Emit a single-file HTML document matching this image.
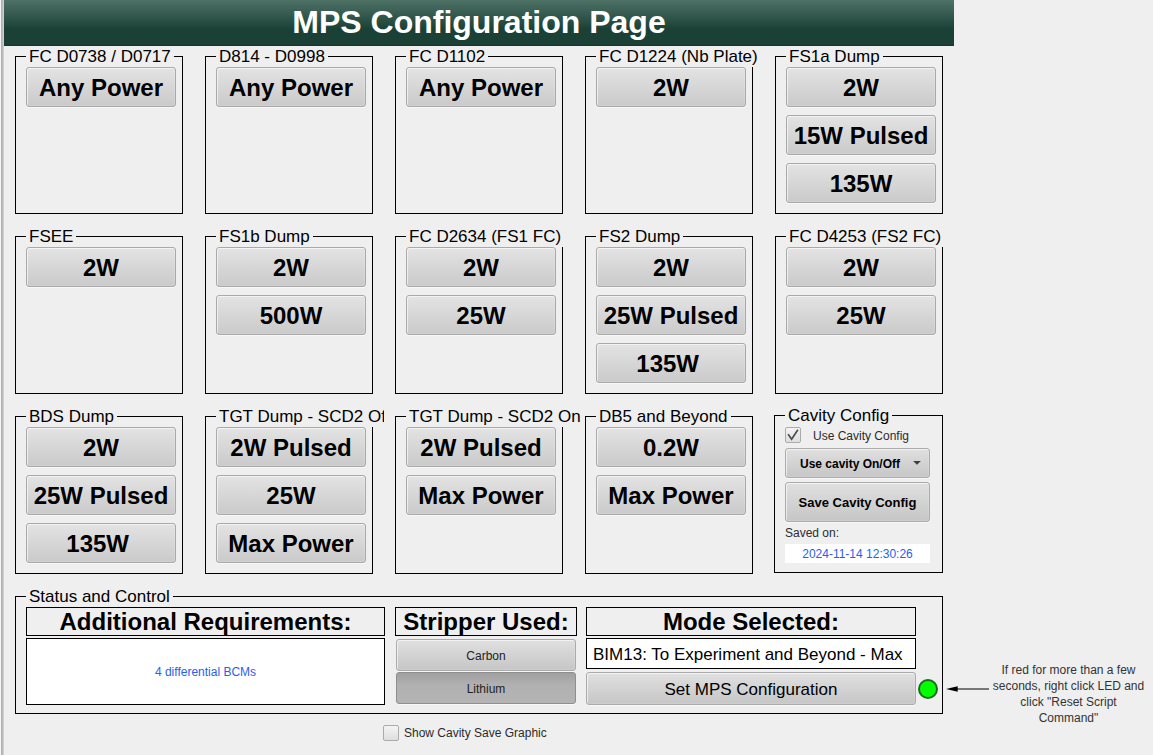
<!DOCTYPE html>
<html><head><meta charset="utf-8"><title>MPS Configuration Page</title>
<style>
*{box-sizing:border-box;margin:0;padding:0}
html,body{width:1153px;height:755px;overflow:hidden;background:#efefef;font-family:"Liberation Sans",sans-serif;position:relative}
.abs{position:absolute}
#edge{position:absolute;left:0;top:0;width:5px;height:755px;background:linear-gradient(to right,#f6f6f6 0,#f6f6f6 1px,#afafaf 1px,#b4b4b4 2px,#c2c2c2 3px,#d8d8d8 4px,#f1f1f1 4px)}
#hdr{position:absolute;left:4px;top:0;width:950px;height:46px;background:linear-gradient(to bottom,#4f7267 0px,#1b4137 29px,#1b4137 44px,#143328 46px);color:#fff;font-weight:bold;font-size:32px;text-align:center;line-height:44px}
.gb{position:absolute;border:1px solid #000;width:168px;height:158px}
.gt{position:absolute;background:#efefef;font-size:17px;line-height:20px;height:20px;padding:0 3px;white-space:nowrap;color:#000;overflow:hidden}
.btn{position:absolute;width:150px;height:40px;border:1px solid #a9a9a9;border-radius:3px;background:linear-gradient(to bottom,#e3e3e3,#cacaca);box-shadow:inset 1px 1px 0 rgba(255,255,255,.6),inset -1px -1px 0 rgba(255,255,255,.13),0 1px 0 rgba(255,255,255,.55);font-weight:bold;font-size:24px;text-align:center;line-height:38px;padding-top:1px;color:#000;white-space:nowrap}
.lbl{position:absolute;border:1px solid #000;font-weight:bold;font-size:24px;text-align:center;line-height:26px;padding-top:1px;white-space:nowrap}
.sb{position:absolute;padding-top:1px;border:1px solid #ababab;border-radius:3px;background:linear-gradient(to bottom,#e0e0e0,#c6c6c6);box-shadow:inset 1px 1px 0 rgba(255,255,255,.6),inset -1px -1px 0 rgba(255,255,255,.13),0 1px 0 rgba(255,255,255,.55);text-align:center;white-space:nowrap;color:#2b2b2b}
.cb{position:absolute;width:16px;height:16px;border:1px solid #ababab;border-radius:2px;background:linear-gradient(to bottom,#f4f4f4,#dedede)}
</style></head><body>
<div id="edge"></div>
<div id="hdr">MPS Configuration Page</div>

<div class="gb" style="left:15px;top:56px"></div>
<div class="gt" style="left:26px;top:47px">FC D0738 / D0717</div>
<div class="btn" style="left:26px;top:67px">Any Power</div>
<div class="gb" style="left:205px;top:56px"></div>
<div class="gt" style="left:216px;top:47px">D814 - D0998</div>
<div class="btn" style="left:216px;top:67px">Any Power</div>
<div class="gb" style="left:395px;top:56px"></div>
<div class="gt" style="left:406px;top:47px">FC D1102</div>
<div class="btn" style="left:406px;top:67px">Any Power</div>
<div class="gb" style="left:585px;top:56px"></div>
<div class="gt" style="left:596px;top:47px">FC D1224 (Nb Plate)</div>
<div class="btn" style="left:596px;top:67px">2W</div>
<div class="gb" style="left:775px;top:56px"></div>
<div class="gt" style="left:786px;top:47px">FS1a Dump</div>
<div class="btn" style="left:786px;top:67px">2W</div>
<div class="btn" style="left:786px;top:115px">15W Pulsed</div>
<div class="btn" style="left:786px;top:163px">135W</div>
<div class="gb" style="left:15px;top:236px"></div>
<div class="gt" style="left:26px;top:227px">FSEE</div>
<div class="btn" style="left:26px;top:247px">2W</div>
<div class="gb" style="left:205px;top:236px"></div>
<div class="gt" style="left:216px;top:227px">FS1b Dump</div>
<div class="btn" style="left:216px;top:247px">2W</div>
<div class="btn" style="left:216px;top:295px">500W</div>
<div class="gb" style="left:395px;top:236px"></div>
<div class="gt" style="left:406px;top:227px">FC D2634 (FS1 FC)</div>
<div class="btn" style="left:406px;top:247px">2W</div>
<div class="btn" style="left:406px;top:295px">25W</div>
<div class="gb" style="left:585px;top:236px"></div>
<div class="gt" style="left:596px;top:227px">FS2 Dump</div>
<div class="btn" style="left:596px;top:247px">2W</div>
<div class="btn" style="left:596px;top:295px">25W Pulsed</div>
<div class="btn" style="left:596px;top:343px">135W&nbsp;</div>
<div class="gb" style="left:775px;top:236px"></div>
<div class="gt" style="left:786px;top:227px">FC D4253 (FS2 FC)</div>
<div class="btn" style="left:786px;top:247px">2W</div>
<div class="btn" style="left:786px;top:295px">25W</div>
<div class="gb" style="left:15px;top:416px"></div>
<div class="gt" style="left:26px;top:407px">BDS Dump</div>
<div class="btn" style="left:26px;top:427px">2W</div>
<div class="btn" style="left:26px;top:475px">25W Pulsed</div>
<div class="btn" style="left:26px;top:523px">135W&nbsp;</div>
<div class="gb" style="left:205px;top:416px"></div>
<div class="gt" style="left:216px;top:407px;width:168px;padding-right:0">TGT Dump - SCD2 Off</div>
<div class="btn" style="left:216px;top:427px">2W Pulsed</div>
<div class="btn" style="left:216px;top:475px">25W</div>
<div class="btn" style="left:216px;top:523px">Max Power</div>
<div class="gb" style="left:395px;top:416px"></div>
<div class="gt" style="left:406px;top:407px">TGT Dump - SCD2 On</div>
<div class="btn" style="left:406px;top:427px">2W Pulsed</div>
<div class="btn" style="left:406px;top:475px">Max Power</div>
<div class="gb" style="left:585px;top:416px"></div>
<div class="gt" style="left:596px;top:407px">DB5 and Beyond</div>
<div class="btn" style="left:596px;top:427px">0.2W</div>
<div class="btn" style="left:596px;top:475px">Max Power</div>
<div class="gb" style="left:774px;top:415px;width:169px;height:158px"></div>
<div class="gt" style="left:785px;top:406px">Cavity Config</div>
<div class="cb" style="left:785px;top:427px"><svg width="14" height="14" viewBox="0 0 14 14" style="position:absolute;left:0;top:0"><path d="M2.1 6.1 L5.6 11.3 L11.9 1.8" fill="none" stroke="#4d4d4d" stroke-width="1.7"/></svg></div>
<div class="abs" style="left:813px;top:429px;font-size:12px;line-height:14px;color:#2b2b2b;white-space:nowrap">Use Cavity Config</div>
<div class="sb" style="left:785px;top:448px;width:145px;height:30px;font-weight:bold;font-size:12px;line-height:28px;color:#000;text-align:left;padding-left:14px">Use cavity On/Off<svg width="9" height="5" style="position:absolute;left:127px;top:12px"><path d="M0.1 0 L7.9 0 L4 3.8Z" fill="#3d3d3d"/></svg></div>
<div class="sb" style="left:785px;top:482px;width:145px;height:40px;font-weight:bold;font-size:13px;line-height:38px;color:#000">Save Cavity Config</div>
<div class="abs" style="left:785px;top:526px;font-size:12px;line-height:14px;color:#2b2b2b;white-space:nowrap">Saved on:</div>
<div class="abs" style="left:785px;top:544px;width:145px;height:19px;background:#fff;font-size:12px;line-height:19px;padding-top:1px;color:#2860ee;text-align:center;white-space:nowrap">2024-11-14 12:30:26</div>

<div class="gb" style="left:15px;top:596px;width:928px;height:118px"></div>
<div class="gt" style="left:26px;top:587px">Status and Control</div>
<div class="lbl" style="left:26px;top:607px;width:359px;height:29px">Additional Requirements:</div>
<div class="abs" style="left:26px;top:638px;width:359px;height:67px;border:1px solid #000;background:#fff;font-size:12px;line-height:65px;padding-top:1px;text-align:center;color:#2860ee">4 differential BCMs</div>
<div class="lbl" style="left:395px;top:607px;width:182px;height:29px">Stripper Used:</div>
<div class="sb" style="left:396px;top:639px;width:180px;height:32px;font-size:12px;line-height:30px;color:#222">Carbon</div>
<div class="sb" style="left:396px;top:672px;width:180px;height:32px;font-size:12px;line-height:30px;background:linear-gradient(to bottom,#a0a0a0,#b1b1b1 40%,#b4b4b4);box-shadow:0 1px 0 rgba(255,255,255,.55);border-color:#8e8e8e;color:#222">Lithium</div>
<div class="lbl" style="left:586px;top:607px;width:330px;height:29px">Mode Selected:</div>
<div class="abs" style="left:586px;top:638px;width:330px;height:31px;border:1px solid #000;background:#fff;font-size:17px;line-height:29px;padding-top:1px;padding-left:6px;white-space:nowrap;color:#000">BIM13: To Experiment and Beyond - Max</div>
<div class="sb" style="left:586px;top:672px;width:330px;height:33px;font-size:17px;line-height:31px;color:#000">Set MPS Configuration</div>
<div class="abs" style="left:918px;top:679px;width:20px;height:20px;border-radius:50%;background:#00ff00;border:2px solid #1b6c1b"></div>
<svg class="abs" style="left:944px;top:682px" width="46" height="14"><line x1="12" y1="7" x2="45" y2="7" stroke="#000" stroke-width="1"/><path d="M2 7 L13.7 4.2 L13.7 9.8Z" fill="#000"/></svg>
<div class="abs" style="left:968px;top:662px;width:201px;font-size:12px;line-height:16px;text-align:center;color:#333">If red for more than a few<br>seconds, right click LED and<br>click "Reset Script<br>Command"</div>
<div class="cb" style="left:383px;top:725px"></div>
<div class="abs" style="left:404px;top:726px;font-size:12px;line-height:14px;color:#2b2b2b;white-space:nowrap">Show Cavity Save Graphic</div>

</body></html>
